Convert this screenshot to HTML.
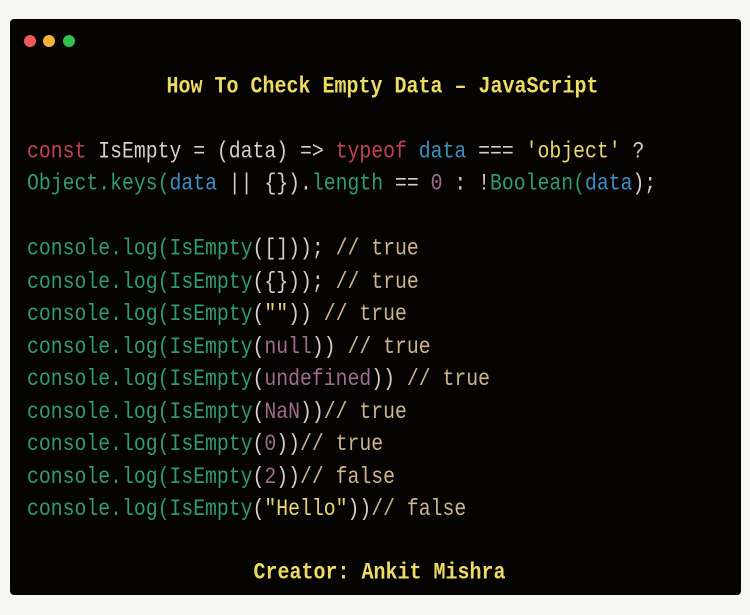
<!DOCTYPE html>
<html><head><meta charset="utf-8"><style>
body{margin:0;width:750px;height:615px;background:#f6f6f3;overflow:hidden;font-family:"Liberation Mono","DejaVu Sans Mono",monospace;}
.card{position:absolute;left:10px;top:19px;width:731px;height:576px;background:#060303;border-radius:4px;}
.dot{position:absolute;top:16px;width:12px;height:12px;border-radius:50%;}
.l{position:absolute;left:17px;font-size:19.8px;white-space:pre;line-height:24px;color:#d8cccc;transform:scaleY(1.15);transform-origin:0 50%;}
.t{position:absolute;left:0;width:731px;text-align:center;font-size:20px;font-weight:bold;color:#ecdc62;white-space:pre;line-height:24px;transform:scaleY(1.15)}
.r{color:#c4414d}.b{color:#3b8fc2}.y{color:#e8d86e}.g{color:#2f9c6c}.p{color:#9e6c8e}.c{color:#cdb58b}
</style></head><body><div class="card">
<div class="dot" style="left:14px;background:#f0585a"></div>
<div class="dot" style="left:33px;background:#f4b43a"></div>
<div class="dot" style="left:53px;background:#2fc24c"></div>
<div class="t" style="top:57px;left:7px">How To Check Empty Data – JavaScript</div>
<div class="l" style="top:121px"><span class="r">const</span> IsEmpty = (data) =&gt; <span class="r">typeof</span> <span class="b">data</span> === <span class="y">'object'</span> ?</div>
<div class="l" style="top:153px"><span class="g">Object.keys(</span><span class="b">data</span> || {}).<span class="g">length</span> == <span class="p">0</span> : !<span class="g">Boolean(</span><span class="b">data</span>);</div>
<div class="l" style="top:218px"><span class="g">console.log(IsEmpty</span>([])); <span class="c">// true</span></div>
<div class="l" style="top:251px"><span class="g">console.log(IsEmpty</span>({})); <span class="c">// true</span></div>
<div class="l" style="top:283px"><span class="g">console.log(IsEmpty</span>(<span class="y">""</span>)) <span class="c">// true</span></div>
<div class="l" style="top:316px"><span class="g">console.log(IsEmpty</span>(<span class="p">null</span>)) <span class="c">// true</span></div>
<div class="l" style="top:348px"><span class="g">console.log(IsEmpty</span>(<span class="p">undefined</span>)) <span class="c">// true</span></div>
<div class="l" style="top:381px"><span class="g">console.log(IsEmpty</span>(<span class="p">NaN</span>))<span class="c">// true</span></div>
<div class="l" style="top:413px"><span class="g">console.log(IsEmpty</span>(<span class="p">0</span>))<span class="c">// true</span></div>
<div class="l" style="top:446px"><span class="g">console.log(IsEmpty</span>(<span class="p">2</span>))<span class="c">// false</span></div>
<div class="l" style="top:478px"><span class="g">console.log(IsEmpty</span>(<span class="y">"Hello"</span>))<span class="c">// false</span></div>
<div class="t" style="top:543px;left:4px">Creator: Ankit Mishra</div>
</div></body></html>
